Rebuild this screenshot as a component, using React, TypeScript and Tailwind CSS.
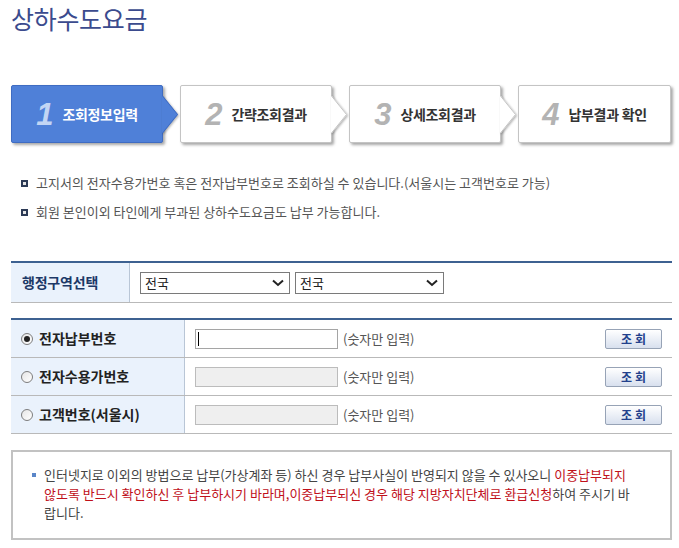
import React from "react";

const kr = { fontFamily: '"Noto Sans CJK KR", "Liberation Sans", sans-serif' };
const num = { fontFamily: '"Liberation Sans", Arial, sans-serif' };

const steps = [
  { n: "1", label: "조회정보입력", active: true },
  { n: "2", label: "간략조회결과", active: false },
  { n: "3", label: "상세조회결과", active: false },
  { n: "4", label: "납부결과 확인", active: false },
];

const Step = ({ n, label, active, last }: { n: string; label: string; active: boolean; last: boolean }) => {
  const fill = active ? "#4f80d8" : "#ffffff";
  const stroke = active ? "#3f6cc2" : "#c4c4c4";
  return (
    <div className={`relative ${last ? "w-[153px]" : "w-[152px] mr-[17px]"} h-[58px]`}>
      <div
        className={`w-full h-full flex items-center justify-center gap-[9px] rounded-[2px] border shadow-[2px_2px_3px_rgba(0,0,0,0.35)] ${
          active ? "bg-[#4f80d8] border-[#3f6cc2]" : "bg-white border-[#c4c4c4]"
        }`}
      >
        <span
          style={num}
          className={`text-[31px] leading-none font-bold italic ${active ? "text-[#c2d5f4]" : "text-[#b3b3b3]"}`}
        >
          {n}
        </span>
        <span
          style={kr}
          className={`text-[14px] font-bold tracking-[-0.3px] ${active ? "text-white" : "text-[#333]"}`}
        >
          {label}
        </span>
      </div>
      {!last && (
        <svg
          className="absolute left-[151px] top-[11px] drop-shadow-[1px_1px_1px_rgba(0,0,0,0.3)]"
          width="17"
          height="37"
          viewBox="0 0 17 37"
        >
          <polygon points="0,0 1,0 16,18.5 1,37 0,37" fill={fill} />
          <polyline points="0.5,0 15.5,18.5 0.5,37" fill="none" stroke={stroke} strokeWidth="1" />
        </svg>
      )}
    </div>
  );
};

const Select = ({ w }: { w: string }) => (
  <div className={`${w} h-[22px] border border-[#7a7a7a] bg-white flex items-center justify-between pl-[4px] pr-[5px]`}>
    <span style={kr} className="text-[13px] text-[#222]">전국</span>
    <svg width="12" height="8" viewBox="0 0 12 8">
      <polyline points="1,1.5 6,6 11,1.5" fill="none" stroke="#222" strokeWidth="2" />
    </svg>
  </div>
);

const Radio = ({ checked }: { checked: boolean }) => (
  <span className="w-[12px] h-[12px] rounded-full border border-[#7d7d7d] bg-gradient-to-br from-[#e6e6e6] to-white flex items-center justify-center">
    {checked && <span className="w-[6px] h-[6px] rounded-full bg-[#222]" />}
  </span>
);

const rows = [
  { label: "전자납부번호", checked: true, enabled: true },
  { label: "전자수용가번호", checked: false, enabled: false },
  { label: "고객번호(서울시)", checked: false, enabled: false },
];

export default function App() {
  return (
    <div style={kr} className="w-[679px] h-[548px] overflow-hidden bg-white">
      <h1 className="pt-[3px] pl-[11px] text-[25px] leading-[30px] text-[#3b4b8e] font-normal tracking-[-0.3px]">
        상하수도요금
      </h1>

      {/* steps */}
      <div className="mt-[52px] ml-[11px] flex">
        {steps.map((s, i) => (
          <Step key={s.n} {...s} last={i === steps.length - 1} />
        ))}
      </div>

      {/* notes */}
      <ul className="mt-[30px] ml-[21px] flex flex-col gap-[9px]">
        <li className="flex items-center gap-[8px] h-[20px]">
          <span className="w-[7px] h-[7px] border-2 border-[#2c3a55] bg-[#e6e6e6]" />
          <span className="text-[13px] text-[#555]">
            고지서의 전자수용가번호 혹은 전자납부번호로 조회하실 수 있습니다.(서울시는 고객번호로 가능)
          </span>
        </li>
        <li className="flex items-center gap-[8px] h-[20px]">
          <span className="w-[7px] h-[7px] border-2 border-[#2c3a55] bg-[#e6e6e6]" />
          <span className="text-[13px] text-[#555]">회원 본인이외 타인에게 부과된 상하수도요금도 납부 가능합니다.</span>
        </li>
      </ul>

      {/* region select */}
      <div className="mt-[39px] ml-[11px] w-[661px] border-t-2 border-b border-t-[#3d6191] border-b-[#b9b9b9] flex h-[42px]">
        <div className="w-[119px] bg-[#eaf2fc] border-r border-[#b9c6d6] flex items-center pl-[11px]">
          <span className="text-[14px] font-bold text-[#1c3867] tracking-[-0.2px]">행정구역선택</span>
        </div>
        <div className="flex-1 flex items-center pl-[10px] gap-[5px]">
          <Select w="w-[150px]" />
          <Select w="w-[149px]" />
        </div>
      </div>

      {/* number input */}
      <div className="mt-[15px] ml-[11px] w-[661px] border-t-2 border-t-[#3d6191]">
        {rows.map((r) => (
          <div key={r.label} className="flex h-[38px] border-b border-[#b9b9b9]">
            <div className="w-[174px] bg-[#eaf2fc] border-r border-[#b9c6d6] flex items-center pl-[10px] gap-[6px]">
              <Radio checked={r.checked} />
              <span className="text-[14px] font-bold text-[#222]">{r.label}</span>
            </div>
            <div className="flex-1 flex items-center pl-[10px] pr-[10px]">
              <div
                className={`w-[143px] h-[20px] border ${
                  r.enabled ? "bg-white border-[#a5a5a5]" : "bg-[#efefef] border-[#bcbcbc]"
                } flex items-center pl-[2px]`}
              >
                {r.enabled && <span className="w-[1px] h-[14px] bg-black" />}
              </div>
              <span className="ml-[5px] text-[13px] text-[#555]">(숫자만 입력)</span>
              <button className="ml-auto w-[57px] h-[20px] rounded-[2px] border border-[#97a3b6] bg-gradient-to-b from-white to-[#d8e0ee] text-[12px] font-bold text-[#23418c] tracking-[3px] pl-[3px] leading-none">
                조회
              </button>
            </div>
          </div>
        ))}
      </div>

      {/* notice */}
      <div className="mt-[16px] ml-[11px] w-[661px] h-[90px] border-2 border-[#c2c2c2] pt-[13px] pl-[19px]">
        <div className="flex gap-[8px]">
          <span className="mt-[8px] w-[4px] h-[4px] bg-[#5a86c8] shrink-0" />
          <p className="text-[13px] leading-[19px] text-[#444] whitespace-nowrap">
            인터넷지로 이외의 방법으로 납부(가상계좌 등) 하신 경우 납부사실이 반영되지 않을 수 있사오니{" "}
            <span className="text-[#c0101a]">이중납부되지</span>
            <br />
            <span className="text-[#c0101a]">
              않도록 반드시 확인하신 후 납부하시기 바라며,이중납부되신 경우 해당 지방자치단체로 환급신청
            </span>
            하여 주시기 바
            <br />
            랍니다.
          </p>
        </div>
      </div>
    </div>
  );
}
